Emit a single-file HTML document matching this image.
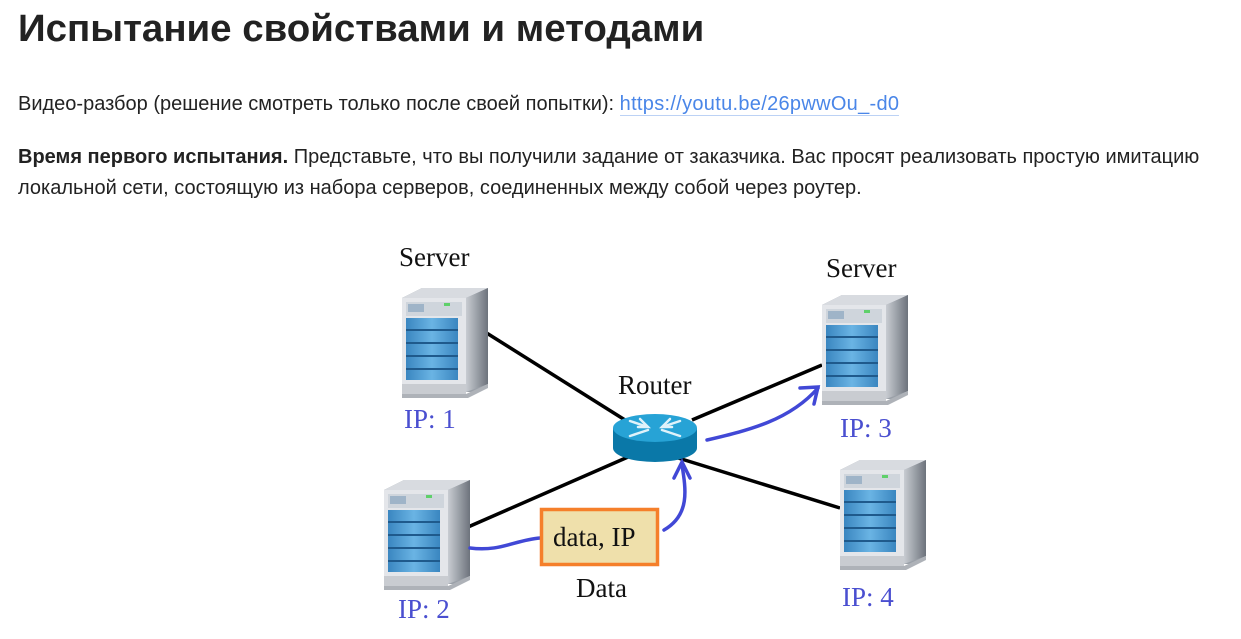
<!DOCTYPE html>
<html><head><meta charset="utf-8"><style>
body{margin:0;width:1241px;height:639px;background:#fff;overflow:hidden;font-family:"Liberation Sans",sans-serif;color:#222}
.t{position:absolute;left:18px;top:8px;font-size:38px;font-weight:bold;white-space:nowrap;transform-origin:0 0;transform:scaleX(1.012)}
.p{position:absolute;left:18px;font-size:20px;white-space:nowrap;transform-origin:0 0}
a{color:#4a86e8;text-decoration:none;border-bottom:1px solid #bcd2f5;letter-spacing:0.3px}
svg{position:absolute;left:0;top:0}
</style></head><body>
<div class="t">Испытание свойствами и методами</div>
<div class="p" style="top:93px">Видео-разбор (решение смотреть только после своей попытки): <a>https://youtu.be/26pwwOu_-d0</a></div>
<div class="p" style="top:146px"><b>Время первого испытания.</b> Представьте, что вы получили задание от заказчика. Вас просят реализовать простую имитацию</div>
<div class="p" style="top:177px">локальной сети, состоящую из набора серверов, соединенных между собой через роутер.</div>
<svg width="1241" height="639" viewBox="0 0 1241 639">
<defs>
<linearGradient id="sd" x1="0" x2="1"><stop offset="0" stop-color="#c8ccd2"/><stop offset="1" stop-color="#6d737c"/></linearGradient>
<linearGradient id="bl" x1="0" x2="1"><stop offset="0" stop-color="#3a86c0"/><stop offset="0.5" stop-color="#6ab4e4"/><stop offset="1" stop-color="#3a86c0"/></linearGradient>
<symbol id="srv" viewBox="0 0 86 112">
<path d="M0 10 L20 0 L86 0 L86 96 L70 104 L0 104Z" fill="#9aa0a8"/>
<path d="M0 10 L64 10 L86 0 L20 0Z" fill="#d8dbe0"/>
<path d="M64 10 L86 0 L86 96 L64 104Z" fill="url(#sd)"/>
<rect x="0" y="10" width="64" height="94" fill="#e4e6ea"/>
<rect x="4" y="14" width="56" height="14" fill="#cfd5dc"/>
<rect x="6" y="16" width="16" height="8" fill="#9fb4c8"/>
<rect x="42" y="15" width="6" height="3" fill="#5fd06a"/>
<rect x="4" y="30" width="52" height="62" fill="url(#bl)"/>
<g stroke="#1f5a8c" stroke-width="2"><line x1="4" y1="42" x2="56" y2="42"/><line x1="4" y1="55" x2="56" y2="55"/><line x1="4" y1="68" x2="56" y2="68"/><line x1="4" y1="81" x2="56" y2="81"/></g>
<rect x="0" y="96" width="64" height="10" fill="#c9ccd1"/>
<path d="M0 106 L64 106 L86 96 L86 100 L66 110 L0 110Z" fill="#aeb2b8"/>
</symbol>
</defs>
<g stroke="#000" stroke-width="3.5">
<line x1="485" y1="332" x2="625" y2="420"/>
<line x1="468" y1="527" x2="628" y2="457"/>
<line x1="822" y1="365" x2="692" y2="420"/>
<line x1="840" y1="508" x2="675" y2="457"/>
</g>
<use href="#srv" x="402" y="288" width="86" height="112"/>
<use href="#srv" x="384" y="480" width="86" height="112"/>
<use href="#srv" x="822" y="295" width="86" height="112"/>
<use href="#srv" x="840" y="460" width="86" height="112"/>
<path d="M613 428 L613 448 A42 14 0 0 0 697 448 L697 428Z" fill="#0a78a8"/>
<ellipse cx="655" cy="428" rx="42" ry="14" fill="#27a3d6"/>
<g stroke="#dff2fa" stroke-width="2.5" fill="none" stroke-linecap="round">
<path d="M630 421 L648 427 M680 421 L662 427 M630 436 L648 430 M680 436 L662 430"/>
<path d="M640 419 L648 427 L638 427 M670 419 L662 427 L672 427"/>
</g>
<g fill="none" stroke="#4148d6" stroke-width="3.5" stroke-linecap="round">
<path d="M470 548 C500 552 515 540 540 538"/>
<path d="M664 530 C690 515 686 490 682 465"/>
<path d="M674 478 L682 462 L690 478"/>
<path d="M707 440 C750 430 790 420 818 388"/>
<path d="M800 388 L818 387 L814 404"/>
</g>
<rect x="541.5" y="509.5" width="116" height="55" fill="#efe0ab" stroke="#f57f2a" stroke-width="3.5"/>
<g font-family="Liberation Serif,serif" font-size="27">
<text x="553" y="546" fill="#111">data, IP</text>
<text x="576" y="597" fill="#111">Data</text>
<text x="399" y="266" fill="#111">Server</text>
<text x="826" y="277" fill="#111">Server</text>
<text x="618" y="394" fill="#111">Router</text>
<text x="404" y="428" fill="#4a4fd0">IP: 1</text>
<text x="398" y="618" fill="#4a4fd0">IP: 2</text>
<text x="840" y="437" fill="#4a4fd0">IP: 3</text>
<text x="842" y="606" fill="#4a4fd0">IP: 4</text>
</g>
</svg>
</body></html>
